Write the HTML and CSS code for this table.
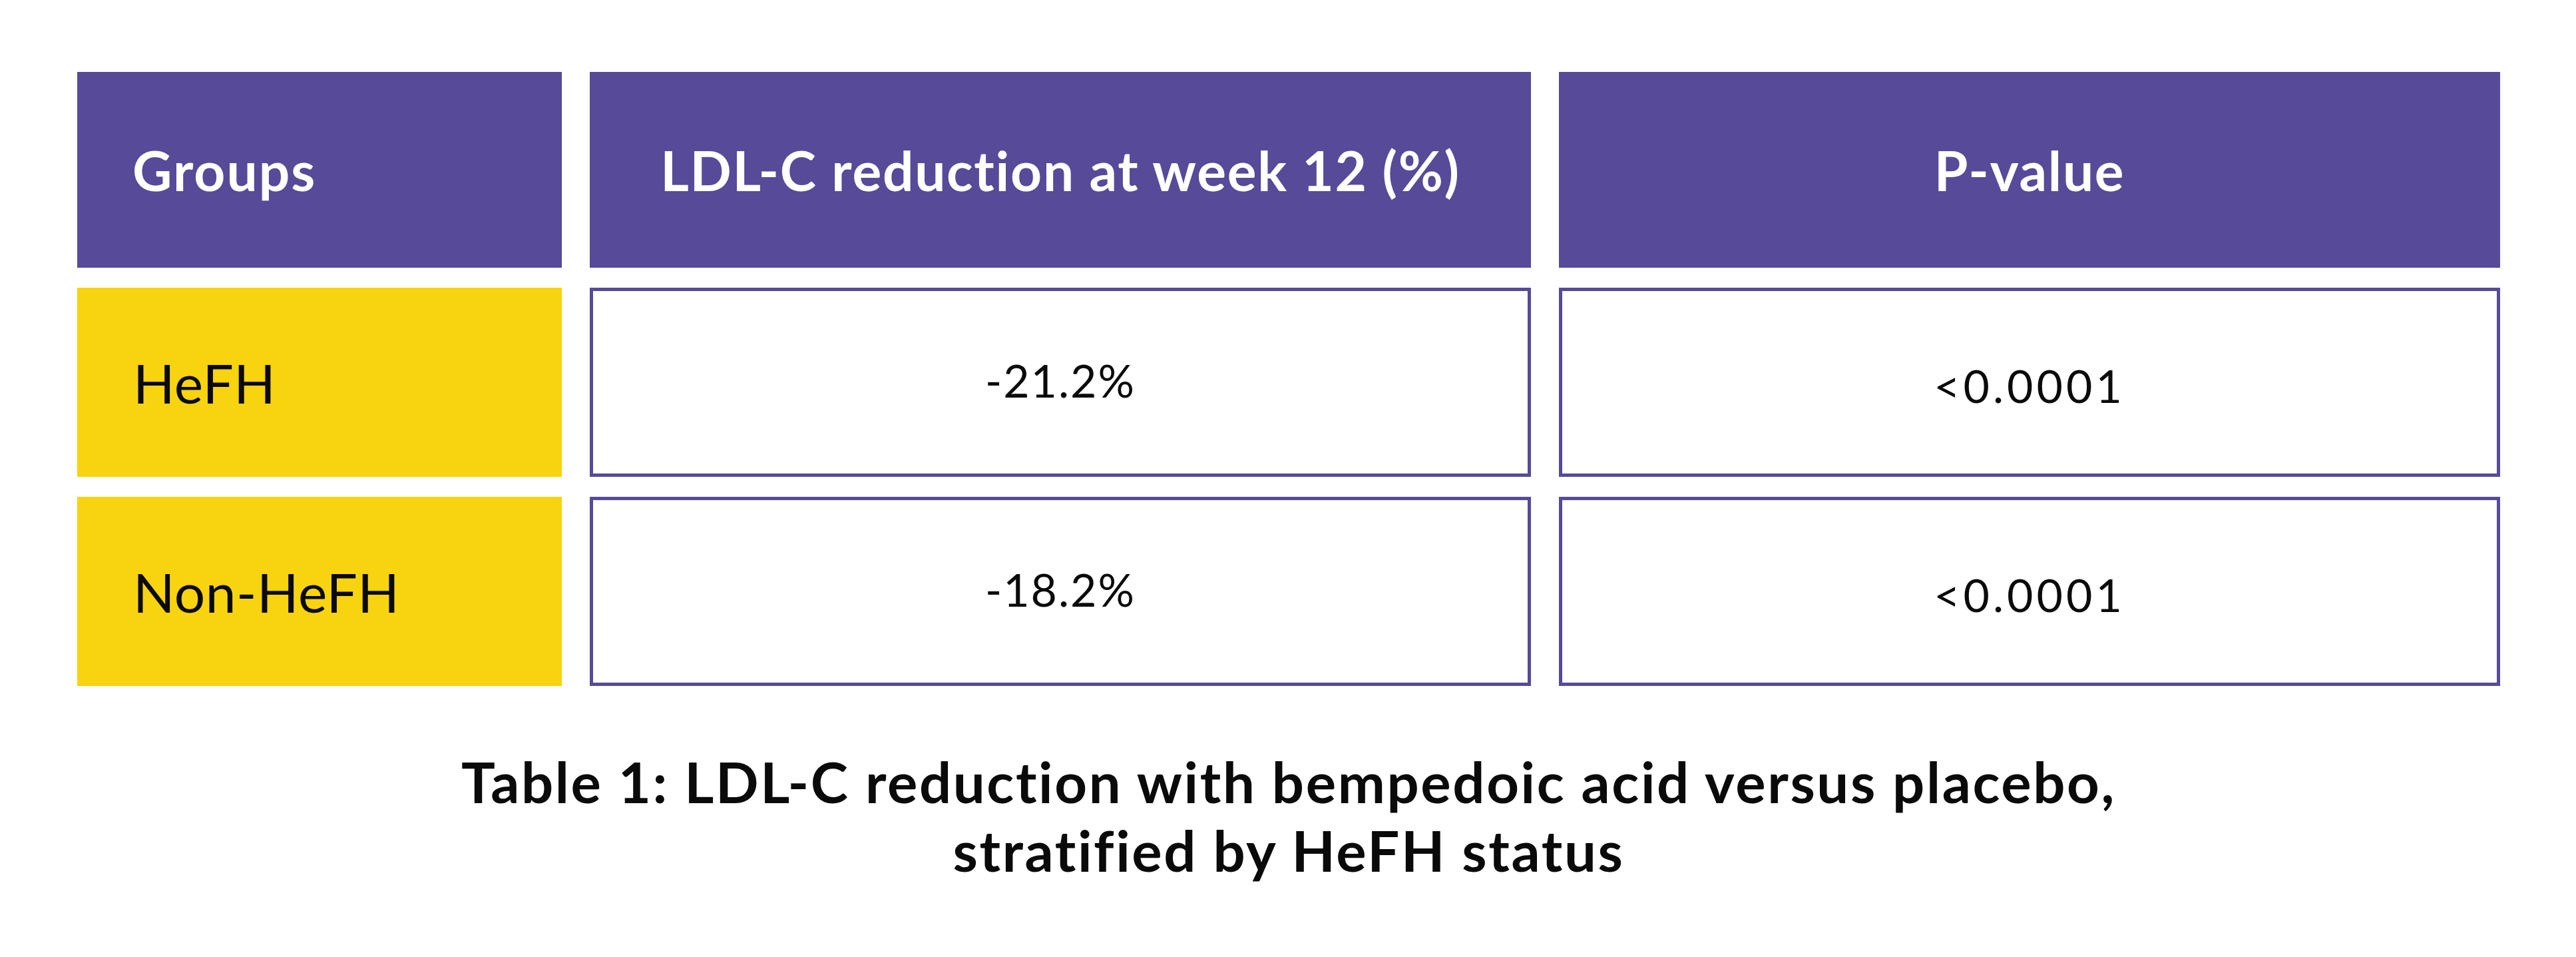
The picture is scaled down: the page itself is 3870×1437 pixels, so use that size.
FILE: index.html
```html
<!DOCTYPE html>
<html lang="en">
<head>
<meta charset="utf-8">
<title>LDL-C reduction table</title>
<link rel="stylesheet" href="styles.css">
</head>
<body>
<main class="page">
  <div class="table">
    <div class="cell head head-left">Groups</div>
    <div class="cell head">LDL-C reduction at week 12 (%)</div>
    <div class="cell head">P-value</div>

    <div class="cell group">HeFH</div>
    <div class="cell value"><span class="num">-21.2%</span></div>
    <div class="cell value"><span class="num pval">&lt;0.0001</span></div>

    <div class="cell group">Non-HeFH</div>
    <div class="cell value"><span class="num">-18.2%</span></div>
    <div class="cell value"><span class="num pval">&lt;0.0001</span></div>
  </div>
  <p class="caption">Table 1: LDL-C reduction with bempedoic acid versus placebo,<br>stratified by HeFH status</p>
</main>
</body>
</html>
```

FILE: styles.css
```css
html, body {
  margin: 0;
  padding: 0;
  background: #ffffff;
}

body {
  font-family: Lato, "Open Sans", "Liberation Sans", sans-serif;
  color: #0a0a0a;
  width: 3870px;
  height: 1437px;
  overflow: hidden;
}

.page {
  padding: 108px 0 0 116px;
}

.table {
  display: grid;
  grid-template-columns: 728px 1414px 1414px;
  grid-template-rows: 294px 284px 284px;
  column-gap: 42px;
  row-gap: 30px;
  width: 3640px;
}

.cell {
  display: flex;
  align-items: center;
  box-sizing: border-box;
  font-size: 82px;
}

.head {
  background: #564a99;
  color: #ffffff;
  font-weight: 700;
  letter-spacing: 1.7px;
  justify-content: center;
}

.head-left {
  justify-content: flex-start;
  padding-left: 83px;
  letter-spacing: 2px;
}

.group {
  background: #f8d30f;
  color: #0a0a0a;
  font-weight: 400;
  padding-left: 84px;
  letter-spacing: 0.5px;
}

.value {
  border: 5px solid #564a99;
  justify-content: center;
  background: #ffffff;
}

.num {
  font-size: 68px;
  font-weight: 400;
  letter-spacing: 2px;
  position: relative;
  top: -4px;
}

.num.pval {
  letter-spacing: 5px;
  top: 4px;
}

.caption {
  margin: 92px 0 0 0;
  width: 3640px;
  text-align: center;
  font-size: 85px;
  line-height: 103px;
  font-weight: 700;
  letter-spacing: 2.6px;
  color: #0a0a0a;
}
```
